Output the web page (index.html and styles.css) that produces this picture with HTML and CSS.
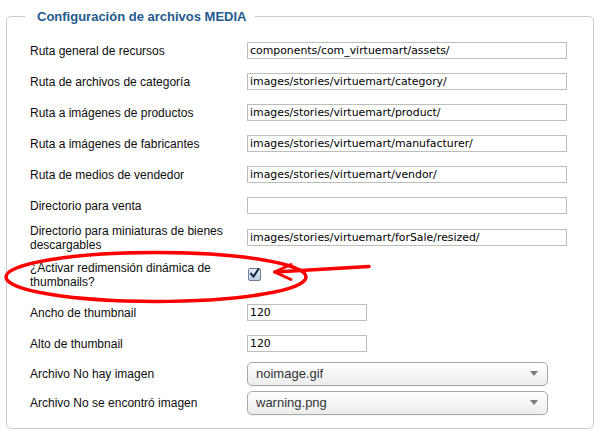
FILE: index.html
```html
<!DOCTYPE html>
<html lang="es">
<head>
<meta charset="utf-8">
<title>Configuración de archivos MEDIA</title>
<link rel="stylesheet" href="styles.css">
</head>
<body>
<fieldset class="panel">
  <legend class="panel-title">Configuración de archivos MEDIA</legend>
  <div class="form">
    <div class="row">
      <label class="lbl">Ruta general de recursos</label>
      <div class="field"><input class="text-input wide" type="text" value="components/com_virtuemart/assets/"></div>
    </div>
    <div class="row">
      <label class="lbl">Ruta de archivos de categoría</label>
      <div class="field"><input class="text-input wide" type="text" value="images/stories/virtuemart/category/"></div>
    </div>
    <div class="row">
      <label class="lbl">Ruta a imágenes de productos</label>
      <div class="field"><input class="text-input wide" type="text" value="images/stories/virtuemart/product/"></div>
    </div>
    <div class="row">
      <label class="lbl">Ruta a imágenes de fabricantes</label>
      <div class="field"><input class="text-input wide" type="text" value="images/stories/virtuemart/manufacturer/"></div>
    </div>
    <div class="row">
      <label class="lbl">Ruta de medios de vendedor</label>
      <div class="field"><input class="text-input wide" type="text" value="images/stories/virtuemart/vendor/"></div>
    </div>
    <div class="row">
      <label class="lbl">Directorio para venta</label>
      <div class="field"><input class="text-input wide" type="text" value=""></div>
    </div>
    <div class="row row--double">
      <label class="lbl">Directorio para miniaturas de bienes descargables</label>
      <div class="field"><input class="text-input wide" type="text" value="images/stories/virtuemart/forSale/resized/"></div>
    </div>
    <div class="row row--check">
      <label class="lbl">¿Activar redimensión dinámica de thumbnails?</label>
      <div class="field">
        <span class="checkbox">
          <svg width="11" height="11" viewBox="0 0 11 11"><path d="M2 5.6 L4.4 8.6 L9.4 1.2" fill="none" stroke="#15233d" stroke-width="2" stroke-linecap="round" stroke-linejoin="round"/></svg>
        </span>
      </div>
    </div>
    <div class="row">
      <label class="lbl">Ancho de thumbnail</label>
      <div class="field"><input class="text-input short" type="text" value="120"></div>
    </div>
    <div class="row">
      <label class="lbl">Alto de thumbnail</label>
      <div class="field"><input class="text-input short" type="text" value="120"></div>
    </div>
    <div class="row row--select">
      <label class="lbl">Archivo No hay imagen</label>
      <div class="field"><div class="select"><span class="select-text">noimage.gif</span><span class="select-arrow"></span></div></div>
    </div>
    <div class="row row--select">
      <label class="lbl">Archivo No se encontró imagen</label>
      <div class="field"><div class="select"><span class="select-text">warning.png</span><span class="select-arrow"></span></div></div>
    </div>
  </div>
</fieldset>
<svg class="annotation" width="601" height="440" viewBox="0 0 601 440">
  <ellipse cx="156" cy="277" rx="150" ry="24.5" fill="none" stroke="#f00" stroke-width="3.5"/>
  <path d="M369 266.5 L275 272" fill="none" stroke="#f00" stroke-width="3.5" stroke-linecap="round"/>
  <path d="M291 264.5 L274.5 272 L291 279.5" fill="none" stroke="#f00" stroke-width="3" stroke-linecap="round" stroke-linejoin="round"/>
</svg>
</body>
</html>
```

FILE: styles.css
```css
html, body {
  margin: 0;
  padding: 0;
  background: #ffffff;
}

body {
  width: 601px;
  height: 440px;
  position: relative;
  overflow: hidden;
  font-family: "Liberation Sans", Arial, sans-serif;
  color: #111;
}

.panel {
  margin: 8px 7px 0 6px;
  padding: 10px 0 11px 23px;
  border: 1px solid #cbcbcb;
  border-radius: 5px;
  min-width: 0;
}

.panel-title {
  margin-left: -5px;
  padding: 0 9px 0 12px;
  font-size: 13px;
  line-height: 17px;
  font-weight: bold;
  color: #245a8c;
}

.form {
  display: flex;
  flex-direction: column;
}

.row {
  display: grid;
  grid-template-columns: 217px 1fr;
  align-items: center;
  height: 31px;
}

.row--double {
  height: 33px;
}

.row--check {
  height: 41px;
  margin-bottom: 2px;
}

.row--select {
  height: 29px;
}

.lbl {
  font-size: 12px;
  line-height: 14px;
  color: #0d0d0d;
  padding-right: 12px;
}

.field {
  display: flex;
  align-items: center;
}

.text-input {
  box-sizing: border-box;
  height: 17px;
  margin: 0;
  padding: 0 2px;
  border: 1px solid #bdbdbd;
  border-radius: 0;
  background: #ffffff;
  font-family: "DejaVu Sans", Verdana, sans-serif;
  font-size: 10.9px;
  color: #000;
  outline: none;
}

.text-input.wide {
  width: 320px;
}

.text-input.short {
  width: 120px;
}

.checkbox {
  box-sizing: border-box;
  width: 13px;
  height: 13px;
  margin-left: 1px;
  border: 1px solid #6f7f94;
  border-radius: 2px;
  background: linear-gradient(#e6eef8, #b9cde6);
  display: flex;
  align-items: center;
  justify-content: center;
}

.checkbox svg {
  display: block;
  margin-top: -2px;
}

.select {
  box-sizing: border-box;
  width: 301px;
  height: 24px;
  border: 1px solid #a8a8a8;
  border-radius: 5px;
  background: linear-gradient(#ffffff 0%, #f7f7f7 45%, #ececec 100%);
  display: flex;
  align-items: center;
  justify-content: space-between;
  padding: 0 9px 0 8px;
  box-shadow: 0 1px 0 rgba(0, 0, 0, 0.04);
}

.select-text {
  font-family: "Liberation Sans", Arial, sans-serif;
  font-size: 13px;
  color: #333;
}

.select-arrow {
  width: 0;
  height: 0;
  border-left: 4.5px solid transparent;
  border-right: 4.5px solid transparent;
  border-top: 5px solid #7a7a7a;
}

.annotation {
  position: absolute;
  top: 0;
  left: 0;
  pointer-events: none;
}
```
